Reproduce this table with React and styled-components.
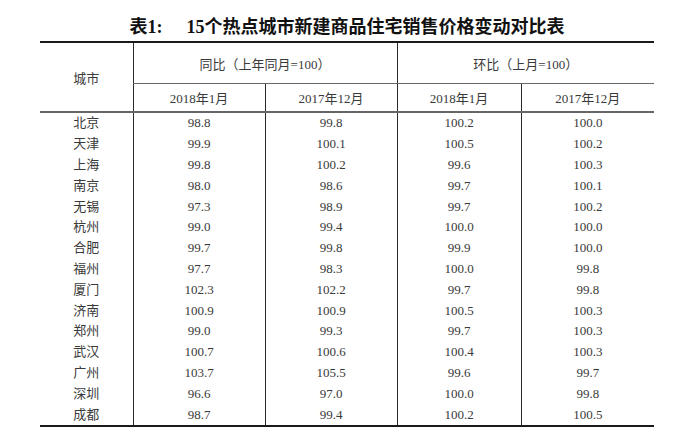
import React from "react";
import styled, { createGlobalStyle } from "styled-components";

const GlobalStyle = createGlobalStyle`
  html, body {
    margin: 0;
    padding: 0;
    background: #ffffff;
  }
`;

const Page = styled.div`
  width: 675px;
  height: 442px;
  padding-left: 40px;
  box-sizing: border-box;
  font-family: "Liberation Serif", "Noto Sans CJK SC", serif;
  color: #3a3a3a;
`;

const Title = styled.div`
  width: 614px;
  padding-top: 17px;
  height: 24px;
  line-height: 20px;
  display: flex;
  justify-content: center;
  gap: 24px;
  font-size: 18px;
  font-weight: bold;
  color: #111;
`;

const Table = styled.table`
  width: 614px;
  border-collapse: collapse;
  table-layout: fixed;
  border-top: 2px solid #1a1a1a;
  border-bottom: 2px solid #1a1a1a;
  font-size: 13px;
`;

const HeadCell = styled.th`
  font-weight: normal;
  height: ${(p) => p.$h}px;
  padding: 0;
  text-align: center;
  vertical-align: middle;
  border-left: ${(p) => (p.$first ? "none" : "1px solid #2a2a2a")};
  border-bottom: ${(p) => (p.$split ? "1px solid #666" : "2px solid #666")};
`;

const Cell = styled.td`
  height: 20.8px;
  padding: 0;
  line-height: 20px;
  text-align: center;
  border-left: ${(p) => (p.$first ? "none" : "1px solid #2a2a2a")};
`;

const columns = [93, 132, 132, 124, 133];

const rows = [
  ["北京", "98.8", "99.8", "100.2", "100.0"],
  ["天津", "99.9", "100.1", "100.5", "100.2"],
  ["上海", "99.8", "100.2", "99.6", "100.3"],
  ["南京", "98.0", "98.6", "99.7", "100.1"],
  ["无锡", "97.3", "98.9", "99.7", "100.2"],
  ["杭州", "99.0", "99.4", "100.0", "100.0"],
  ["合肥", "99.7", "99.8", "99.9", "100.0"],
  ["福州", "97.7", "98.3", "100.0", "99.8"],
  ["厦门", "102.3", "102.2", "99.7", "99.8"],
  ["济南", "100.9", "100.9", "100.5", "100.3"],
  ["郑州", "99.0", "99.3", "99.7", "100.3"],
  ["武汉", "100.7", "100.6", "100.4", "100.3"],
  ["广州", "103.7", "105.5", "99.6", "99.7"],
  ["深圳", "96.6", "97.0", "100.0", "99.8"],
  ["成都", "98.7", "99.4", "100.2", "100.5"],
];

const App = () => (
  <Page>
    <GlobalStyle />
    <Title>
      <span>表1:</span>
      <span>15个热点城市新建商品住宅销售价格变动对比表</span>
    </Title>
    <Table>
      <colgroup>
        {columns.map((w, i) => (
          <col key={i} style={{ width: w }} />
        ))}
      </colgroup>
      <thead>
        <tr>
          <HeadCell rowSpan={2} $first $h={40}>城市</HeadCell>
          <HeadCell colSpan={2} $split $h={40}>同比（上年同月=100）</HeadCell>
          <HeadCell colSpan={2} $split $h={40}>环比（上月=100）</HeadCell>
        </tr>
        <tr>
          <HeadCell $h={27}>2018年1月</HeadCell>
          <HeadCell $h={27}>2017年12月</HeadCell>
          <HeadCell $h={27}>2018年1月</HeadCell>
          <HeadCell $h={27}>2017年12月</HeadCell>
        </tr>
      </thead>
      <tbody>
        {rows.map((r) => (
          <tr key={r[0]}>
            {r.map((v, i) => (
              <Cell key={i} $first={i === 0}>{v}</Cell>
            ))}
          </tr>
        ))}
      </tbody>
    </Table>
  </Page>
);

export default App;
